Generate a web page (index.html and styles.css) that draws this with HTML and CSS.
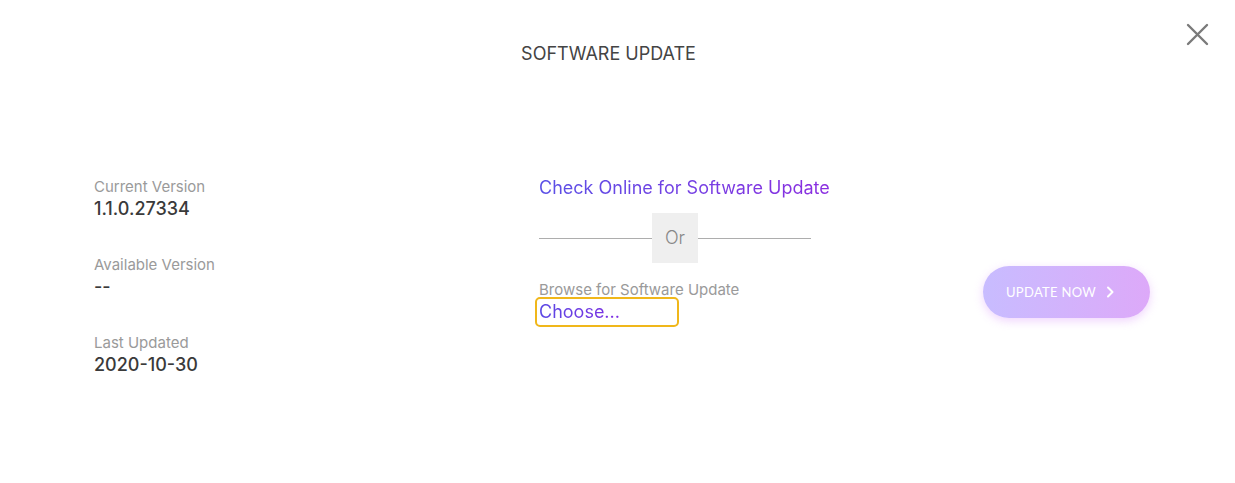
FILE: index.html
```html
<!DOCTYPE html>
<html lang="en">
<head>
    <meta charset="UTF-8">
    <title>Software Update</title>
    <link rel="stylesheet" href="styles.css">
</head>
<body>
<div class="dialog">
    <div class="header">
        <h1 class="title">SOFTWARE UPDATE</h1>
        <span class="close">
            <svg width="23" height="23" viewBox="0 0 23 23"><path d="M2 2L21 21M21 2L2 21" stroke="#7a7a7a" stroke-width="2.4" stroke-linecap="round"/></svg>
        </span>
    </div>
    <div class="content">
        <!--版本信息-->
        <div class="info">
            <div class="label">Current Version</div>
            <div class="value">1.1.0.27334</div>
            <div class="label">Available Version</div>
            <div class="value">--</div>
            <div class="label">Last Updated</div>
            <div class="value">2020-10-30</div>
        </div>
        <!--更新方式-->
        <div class="source">
            <a href="#" class="link">Check Online for Software Update</a>
            <div class="divider"><span class="line"></span><span class="or">Or</span><span class="line"></span></div>
            <div class="label">Browse for Software Update</div>
            <span class="choose"><span class="link">Choose...</span></span>
        </div>
        <div class="action">
            <button class="update">UPDATE NOW
                <svg width="10" height="12" viewBox="0 0 10 12"><path d="M3 1.5L7.5 6L3 10.5" stroke="#fff" stroke-width="2" fill="none" stroke-linecap="round" stroke-linejoin="round"/></svg>
            </button>
        </div>
    </div>
</div>
</body>
</html>
```
FILE: styles.css
```css
* {
    margin: 0;
    padding: 0;
    box-sizing: border-box;
}

body {
    font-family: Inter, "Noto Sans", sans-serif;
    background: #fff;
    color: #333;
}

.dialog {
    width: 1235px;
    height: 483px;
    position: relative;
}

.header {
    padding-top: 42px;
    height: 176px;
}

.title {
    text-align: center;
    font-size: 18px;
    line-height: 24px;
    font-weight: 400;
    color: #444;
    padding-right: 18px;
}

.close {
    position: absolute;
    top: 23px;
    right: 26px;
    width: 23px;
    height: 23px;
}

.content {
    display: grid;
    grid-template-columns: 445px 444px auto;
    padding-left: 94px;
}

.info {
    padding-top: 1px;
}

.label {
    font-size: 15px;
    line-height: 20px;
    color: #9a9a9a;
}

.value {
    font-size: 18px;
    line-height: 24px;
    font-weight: 500;
    color: #3a3a3a;
    margin-bottom: 34px;
}

.source {
    display: flex;
    flex-direction: column;
    align-items: flex-start;
}

.link {
    font-size: 18px;
    line-height: 24px;
    text-decoration: none;
    background: linear-gradient(90deg, #5a50e6, #8b2ee0);
    -webkit-background-clip: text;
    background-clip: text;
    color: transparent;
}

.divider {
    display: flex;
    align-items: center;
    width: 272px;
    margin-top: 13px;
    margin-bottom: 17px;
}

.line {
    width: 113px;
    height: 1px;
    background: #adadad;
}

.or {
    width: 46px;
    height: 50px;
    line-height: 50px;
    text-align: center;
    background: #efefef;
    font-size: 18px;
    font-weight: 300;
    color: #888;
}

.choose {
    display: block;
    width: 144px;
    height: 30px;
    margin-top: -3px;
    margin-left: -4px;
    padding-left: 2px;
    border: 2.5px solid #f0b71a;
    border-radius: 5px;
    line-height: 26px;
}

.choose .link {
    background: linear-gradient(90deg, #5a48e4, #7f2fe2);
    -webkit-background-clip: text;
    background-clip: text;
}

.update {
    margin-top: 90px;
    width: 167px;
    height: 52px;
    border: none;
    border-radius: 26px;
    background: linear-gradient(90deg, #c8bcff, #dda9f9);
    box-shadow: 0 3px 10px rgba(222, 160, 250, 0.45);
    color: #fff;
    font-family: Lato, Inter, sans-serif;
    font-size: 13px;
    letter-spacing: 0.3px;
    display: flex;
    align-items: center;
    padding-left: 23px;
    gap: 9px;
    cursor: pointer;
}
```
